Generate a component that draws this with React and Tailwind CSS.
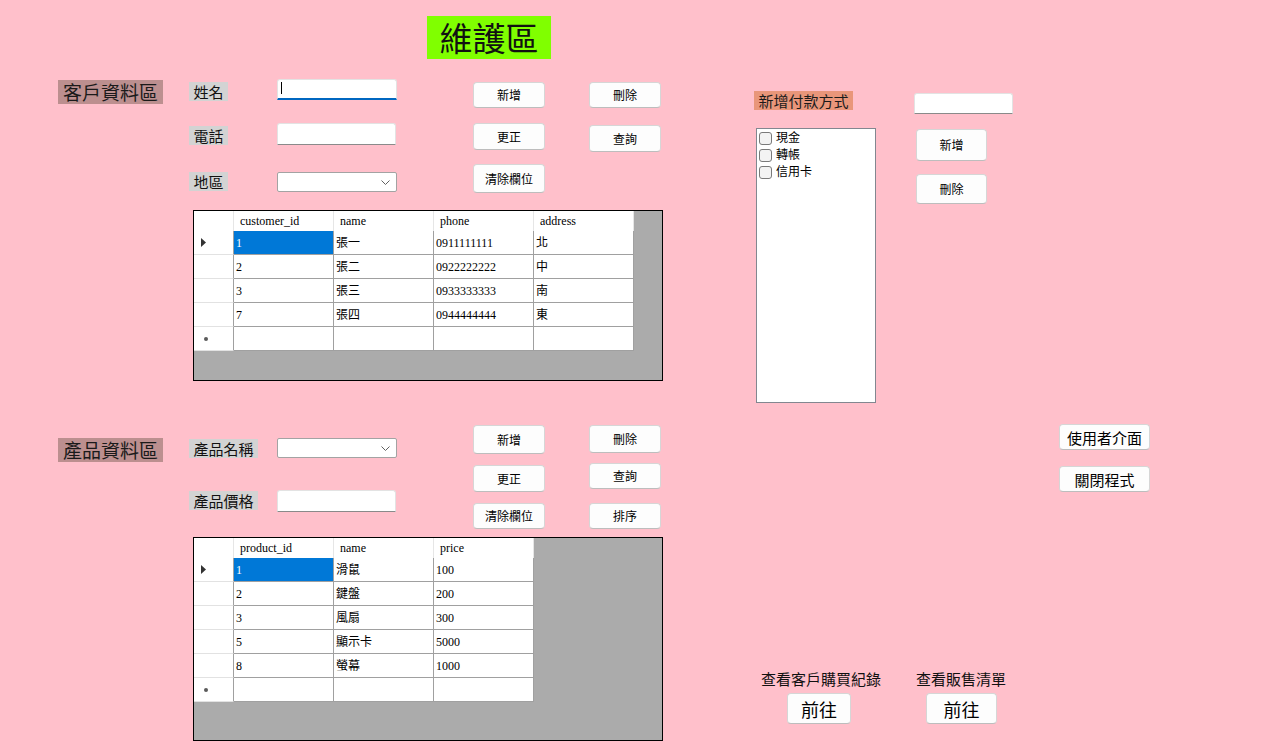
import React from "react";

function Btn({ className = "", children }) {
  return (
    <button
      type="button"
      className={
        "flex items-center justify-center bg-[#fdfdfd] border border-[#d6d6d6] border-b-[#bdbdbd] rounded-[4px] text-black leading-none " +
        className
      }
    >
      {children}
    </button>
  );
}

function Label({ className = "", children }) {
  return (
    <div
      className={
        "bg-[#d3d3d3] h-[19px] text-[15px] leading-[19px] flex items-center justify-center text-[#111] " +
        className
      }
    >
      {children}
    </div>
  );
}

function TextBox({ className = "", focused = false }) {
  if (focused) {
    return (
      <div
        className={
          "bg-white border border-[#e3e3e3] border-b-2 border-b-[#0067c0] rounded-t-[3px] flex items-start pl-[3px] pt-[2px] " +
          className
        }
      >
        <div className="w-px h-[12px] bg-black"></div>
      </div>
    );
  }
  return (
    <div
      className={
        "bg-white border border-[#e3e3e3] border-b-[#8a8a8a] rounded-t-[3px] " +
        className
      }
    ></div>
  );
}

function Combo({ className = "" }) {
  return (
    <div
      className={
        "bg-white border border-[#a3a3a3] rounded-[2px] flex items-center justify-end pr-[6px] " +
        className
      }
    >
      <svg width="9" height="5" viewBox="0 0 9 5">
        <path d="M0.5 0.5 L4.5 4.5 L8.5 0.5" stroke="#606060" fill="none" strokeWidth="1" />
      </svg>
    </div>
  );
}

function SectionLabel({ className = "", children }) {
  return (
    <div
      className={
        "bg-[#bc8f8f] w-[105px] h-[24px] text-[19px] leading-[24px] text-center text-[#1a1a1a] " +
        className
      }
    >
      {children}
    </div>
  );
}

function DataGrid({ headers, rows, className = "" }) {
  return (
    <div
      className={
        "border border-black bg-[#ababab] w-[470px] font-['Liberation_Serif','Noto_Sans_CJK_TC',serif] text-[12px] text-black " +
        className
      }
    >
      <div className="flex bg-white w-max h-[20px]">
        <div className="w-[40px] h-full border-r border-[#e6e6e6]"></div>
        {headers.map((h) => (
          <div
            key={h}
            className="w-[100px] h-full border-r border-[#e6e6e6] pl-[6px] flex items-center leading-none"
          >
            {h}
          </div>
        ))}
      </div>
      {rows.map((r, i) => (
        <div key={i} className="flex w-max h-[24px]">
          <div className="w-[40px] h-full bg-white border-b border-r border-[#e2e2e2] border-r-[#a0a0a0] flex items-center pl-[7px]">
            {i === 0 ? (
              <svg width="5" height="9" viewBox="0 0 5 9">
                <path d="M0 0 L5 4.5 L0 9 Z" fill="#333" />
              </svg>
            ) : null}
            {i === rows.length - 1 ? (
              <div className="ml-[3px] w-[4px] h-[4px] rounded-full bg-[#5a5a5a]"></div>
            ) : null}
          </div>
          {headers.map((h, j) => {
            const selected = i === 0 && j === 0;
            return (
              <div
                key={h}
                className={
                  "w-[100px] h-full border-b border-r border-[#a0a0a0] pl-[2px] flex items-center leading-none " +
                  (selected ? "bg-[#0078d7] text-white" : "bg-white")
                }
              >
                {r[j]}
              </div>
            );
          })}
        </div>
      ))}
    </div>
  );
}

function CheckItem({ children }) {
  return (
    <div className="flex items-center h-[17px]">
      <div className="w-[13px] h-[13px] rounded-[3px] border border-[#7a7a7a] bg-[#f3f3f3]"></div>
      <div className="ml-[4px] text-[12px] leading-none text-black -mt-[3px]">{children}</div>
    </div>
  );
}

export default function App() {
  const customers = [
    ["1", "張一", "0911111111", "北"],
    ["2", "張二", "0922222222", "中"],
    ["3", "張三", "0933333333", "南"],
    ["7", "張四", "0944444444", "東"],
    ["", "", "", ""],
  ];
  const products = [
    ["1", "滑鼠", "100"],
    ["2", "鍵盤", "200"],
    ["3", "風扇", "300"],
    ["5", "顯示卡", "5000"],
    ["8", "螢幕", "1000"],
    ["", "", ""],
  ];

  return (
    <div className="w-[1278px] h-[754px] overflow-hidden bg-[#ffc0cb] pt-[16px] font-['Noto_Sans_CJK_TC',sans-serif] text-black">
      <div className="ml-[427px] w-[124px] h-[43px] bg-[#80ff00] text-[33px] leading-[43px] text-center text-[#111]">
        維護區
      </div>

      <div className="flex mt-[20px]">
        {/* Left column */}
        <div className="w-[663px] pl-[58px] flex flex-col">
          {/* Customer section */}
          <div className="flex">
            <SectionLabel className="mt-[1px] mr-[26px]">客戶資料區</SectionLabel>
            <div className="flex flex-col">
              <div className="flex h-[131px]">
                <div className="w-[284px] flex flex-col">
                  <div className="flex items-start">
                    <div className="w-[88px]">
                      <Label className="mt-[3px] w-[39px]">姓名</Label>
                    </div>
                    <TextBox focused className="w-[120px] h-[21px]" />
                  </div>
                  <div className="flex items-start mt-[22px]">
                    <div className="w-[88px]">
                      <Label className="mt-[3px] w-[39px]">電話</Label>
                    </div>
                    <TextBox className="w-[119px] h-[22px]" />
                  </div>
                  <div className="flex items-start mt-[27px]">
                    <div className="w-[88px]">
                      <Label className="w-[39px]">地區</Label>
                    </div>
                    <Combo className="w-[120px] h-[20px]" />
                  </div>
                </div>
                <div className="w-[116px] flex flex-col">
                  <Btn className="mt-[3px] w-[72px] h-[26px] text-[12px]">新增</Btn>
                  <Btn className="mt-[15px] w-[72px] h-[27px] text-[12px]">更正</Btn>
                  <Btn className="mt-[14px] w-[72px] h-[29px] text-[12px]">清除欄位</Btn>
                </div>
                <div className="w-[72px] flex flex-col">
                  <Btn className="mt-[3px] w-[72px] h-[26px] text-[12px]">刪除</Btn>
                  <Btn className="mt-[17px] w-[72px] h-[27px] text-[12px]">查詢</Btn>
                </div>
              </div>
              <DataGrid
                className="ml-[4px] h-[171px]"
                headers={["customer_id", "name", "phone", "address"]}
                rows={customers}
              />
            </div>
          </div>

          {/* Product section */}
          <div className="flex mt-[44px]">
            <SectionLabel className="mt-[13px] mr-[26px]">產品資料區</SectionLabel>
            <div className="flex flex-col">
              <div className="flex h-[112px]">
                <div className="w-[284px] flex flex-col pt-[13px]">
                  <div className="flex items-start">
                    <div className="w-[88px]">
                      <Label className="mt-[1px] w-[69px] h-[18px]">產品名稱</Label>
                    </div>
                    <Combo className="w-[120px] h-[20px]" />
                  </div>
                  <div className="flex items-start mt-[32px]">
                    <div className="w-[88px]">
                      <Label className="mt-[1px] w-[69px] h-[18px]">產品價格</Label>
                    </div>
                    <TextBox className="w-[119px] h-[22px]" />
                  </div>
                </div>
                <div className="w-[116px] flex flex-col">
                  <Btn className="w-[72px] h-[29px] text-[12px]">新增</Btn>
                  <Btn className="mt-[11px] w-[72px] h-[27px] text-[12px]">更正</Btn>
                  <Btn className="mt-[11px] w-[72px] h-[26px] text-[12px]">清除欄位</Btn>
                </div>
                <div className="w-[72px] flex flex-col">
                  <Btn className="w-[72px] h-[28px] text-[12px]">刪除</Btn>
                  <Btn className="mt-[10px] w-[72px] h-[26px] text-[12px]">查詢</Btn>
                  <Btn className="mt-[14px] w-[72px] h-[26px] text-[12px]">排序</Btn>
                </div>
              </div>
              <DataGrid
                className="ml-[4px] h-[204px]"
                headers={["product_id", "name", "price"]}
                rows={products}
              />
            </div>
          </div>
        </div>

        {/* Right column */}
        <div className="ml-[91px] pt-[12px] flex flex-col">
          <div className="flex">
            <div className="w-[122px] flex flex-col">
              <div className="w-[99px] h-[19px] bg-[#e9967a] text-[15px] leading-[19px] text-center text-[#1a1a1a]">
                新增付款方式
              </div>
              <div className="ml-[2px] mt-[18px] w-[120px] h-[275px] bg-white border border-[#828790] pl-[2px] pt-[1px]">
                <CheckItem>現金</CheckItem>
                <CheckItem>轉帳</CheckItem>
                <CheckItem>信用卡</CheckItem>
              </div>
            </div>
            <div className="ml-[38px] flex flex-col">
              <TextBox className="mt-[2px] w-[99px] h-[21px]" />
              <Btn className="ml-[2px] mt-[15px] w-[71px] h-[32px] text-[12px]">新增</Btn>
              <Btn className="ml-[2px] mt-[13px] w-[71px] h-[30px] text-[12px]">刪除</Btn>
            </div>
          </div>

          <div className="ml-[305px] mt-[21px] flex flex-col">
            <Btn className="w-[91px] h-[26px] text-[15px]">使用者介面</Btn>
            <Btn className="mt-[16px] w-[91px] h-[26px] text-[15px]">關閉程式</Btn>
          </div>

          <div className="flex mt-[178px]">
            <div className="ml-[7px] flex flex-col items-start">
              <div className="text-[15px] leading-[18px] text-[#111]">查看客戶購買紀錄</div>
              <Btn className="ml-[26px] mt-[5px] w-[64px] h-[31px] text-[18px]">前往</Btn>
            </div>
            <div className="ml-[35px] flex flex-col items-start">
              <div className="text-[15px] leading-[18px] text-[#111]">查看販售清單</div>
              <Btn className="ml-[10px] mt-[5px] w-[71px] h-[31px] text-[18px]">前往</Btn>
            </div>
          </div>
        </div>
      </div>
    </div>
  );
}
